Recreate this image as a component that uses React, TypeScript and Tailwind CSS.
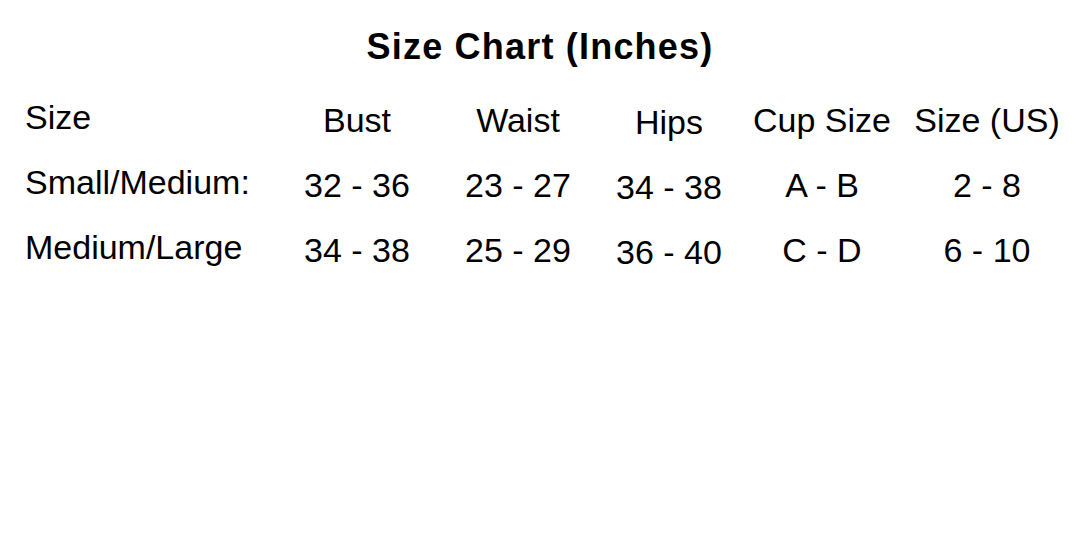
const columns = ["Bust", "Waist", "Hips", "Cup Size", "Size (US)"];

const rows = [
  { label: "Small/Medium:", values: ["32 - 36", "23 - 27", "34 - 38", "A - B", "2 - 8"] },
  { label: "Medium/Large", values: ["34 - 38", "25 - 29", "36 - 40", "C - D", "6 - 10"] },
];

// hips column sits a little lower in the original chart
const cellPad = ["pt-[3px]", "pt-[3px]", "pt-[5px]", "pt-[3px]", "pt-[3px]"];

export default function App() {
  return (
    <div
      className="w-[1080px] h-[540px] bg-white text-black overflow-hidden"
      style={{ fontFamily: '"Liberation Sans", Arial, sans-serif' }}
    >
      <h1 className="pt-[29px] text-center text-[36px] leading-[36px] font-bold tracking-[1.2px]">
        Size Chart (Inches)
      </h1>

      <div className="mt-[35px] pl-[25px] grid grid-cols-[252px_160px_162px_140px_166px_164px] gap-y-[26px] text-[34px] leading-[34px]">
        <div className="whitespace-nowrap">Size</div>
        {columns.map((c, i) => (
          <div key={c} className={`text-center whitespace-nowrap ${cellPad[i]}`}>
            {c}
          </div>
        ))}

        {rows.map((r) => (
          <>
            <div key={r.label} className="whitespace-nowrap">
              {r.label}
            </div>
            {r.values.map((v, i) => (
              <div key={r.label + i} className={`text-center whitespace-nowrap ${cellPad[i]}`}>
                {v}
              </div>
            ))}
          </>
        ))}
      </div>
    </div>
  );
}
